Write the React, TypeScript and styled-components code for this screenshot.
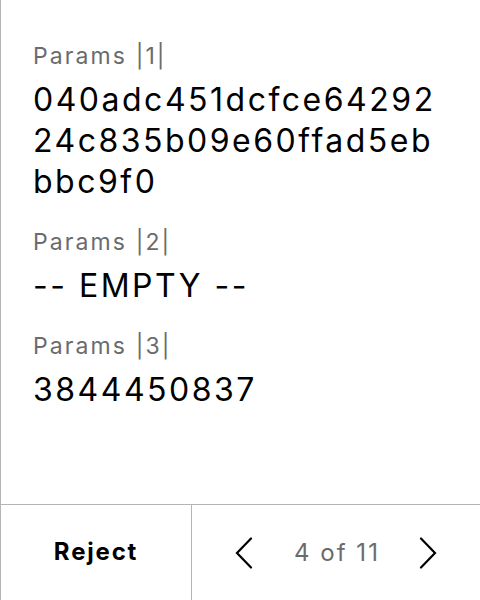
import React from 'react';
import styled, { createGlobalStyle } from 'styled-components';

const GlobalStyles = createGlobalStyle`
  html, body {
    margin: 0;
    padding: 0;
    background: #fff;
  }
  body {
    font-family: Inter, 'Noto Sans', 'Liberation Sans', sans-serif;
    color: #000;
  }
`;

const Screen = styled.div`
  width: 480px;
  height: 600px;
  box-sizing: border-box;
  border-left: 1px solid #b5b5b5;
  display: flex;
  flex-direction: column;
`;

const Content = styled.div`
  flex: 1;
  padding: 43px 30px 0 32px;
  display: flex;
  flex-direction: column;
  gap: 27px;
`;

const Param = styled.div`
  display: flex;
  flex-direction: column;
  gap: 9px;
`;

const Label = styled.div`
  font-size: 23px;
  line-height: 27px;
  letter-spacing: 2.1px;
  color: #6b6b6b;
`;

const Value = styled.div`
  width: 416px;
  font-size: 32px;
  line-height: 41px;
  letter-spacing: 2.5px;
  color: #000;
  word-break: break-all;
`;

const Footer = styled.div`
  height: 96px;
  box-sizing: border-box;
  border-top: 1px solid #b5b5b5;
  display: grid;
  grid-template-columns: 191px 1fr;
`;

const RejectButton = styled.button`
  appearance: none;
  border: none;
  border-right: 1px solid #b5b5b5;
  background: transparent;
  padding: 0 0 2px;
  font-family: inherit;
  font-size: 24px;
  font-weight: 700;
  letter-spacing: 1.8px;
  color: #000;
  cursor: pointer;
`;

const Pager = styled.div`
  display: flex;
  align-items: center;
  justify-content: center;
  gap: 41px;
`;

const Arrow = styled.button`
  appearance: none;
  border: none;
  background: transparent;
  padding: 0;
  display: flex;
  cursor: pointer;
`;

const Count = styled.span`
  font-size: 24px;
  letter-spacing: 2px;
  margin-right: -2px;
  color: #6b6b6b;
`;

const Chevron = ({ dir }: { dir: 'left' | 'right' }) => (
  <svg width="18" height="32" viewBox="0 0 18 32" fill="none">
    <path
      d={dir === 'left' ? 'M16 1.5 L2 16 L16 30.5' : 'M2 1.5 L16 16 L2 30.5'}
      stroke="#000"
      strokeWidth="2.2"
      strokeLinecap="round"
      strokeLinejoin="miter"
    />
  </svg>
);

const params = [
  { label: 'Params |1|', value: '040adc451dcfce6429224c835b09e60ffad5ebbbc9f0' },
  { label: 'Params |2|', value: '-- EMPTY --' },
  { label: 'Params |3|', value: '3844450837' },
];

const App = () => (
  <Screen>
    <GlobalStyles />
    <Content>
      {params.map((p) => (
        <Param key={p.label}>
          <Label>{p.label}</Label>
          <Value>{p.value}</Value>
        </Param>
      ))}
    </Content>
    <Footer>
      <RejectButton>Reject</RejectButton>
      <Pager>
        <Arrow>
          <Chevron dir="left" />
        </Arrow>
        <Count>4 of 11</Count>
        <Arrow>
          <Chevron dir="right" />
        </Arrow>
      </Pager>
    </Footer>
  </Screen>
);

export default App;
